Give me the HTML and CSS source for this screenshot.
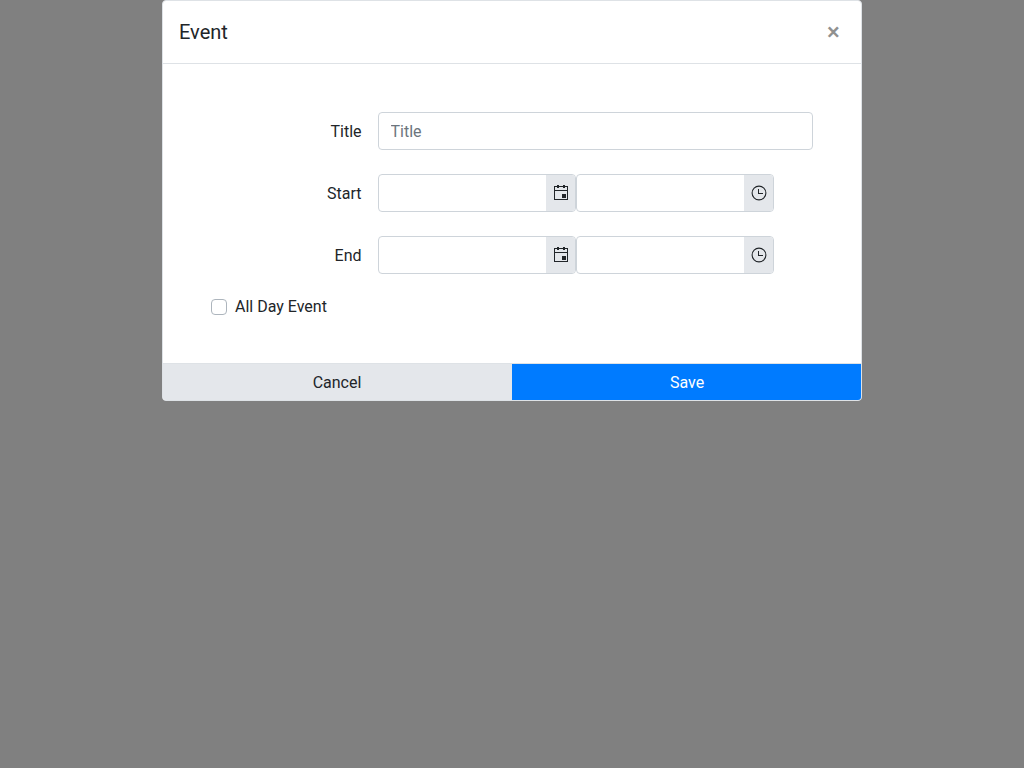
FILE: index.html
```
<!DOCTYPE html>
<html lang="en">
<head>
<meta charset="utf-8">
<title>Event</title>
<link rel="stylesheet" href="styles.css">
</head>
<body>
<svg class="sprite" aria-hidden="true">
  <symbol id="calendar" viewBox="0 0 16 16">
    <path d="M15 1h-3V0h-2v1H6V0H4v1H1v14h14V1zM2 2h2v1h2V2h4v1h2V2h2v3H2zM2 14V6h12v8z"/>
    <path d="M9 9h4v4H9z"/>
  </symbol>
  <symbol id="clock" viewBox="0 0 16 16">
    <circle cx="8" cy="8" r="6.9" fill="none" stroke="currentColor" stroke-width="1.1"/>
    <path d="M7 4h1v4h4v1H7z"/>
  </symbol>
</svg>
<main class="modal">
  <header class="modal-header">
    <h1 class="modal-title">Event</h1>
    <button class="close" type="button">×</button>
  </header>
  <form class="modal-body">
    <div class="row">
      <label class="label" for="title">Title</label>
      <input class="input title-input" id="title" type="text" placeholder="Title">
    </div>
    <div class="row">
      <span class="label">Start</span>
      <div class="picker"><input class="picker-input" type="text"><button class="picker-button" type="button"><svg class="icon"><use href="#calendar"/></svg></button></div>
      <div class="picker"><input class="picker-input" type="text"><button class="picker-button" type="button"><svg class="icon"><use href="#clock"/></svg></button></div>
    </div>
    <div class="row">
      <span class="label">End</span>
      <div class="picker"><input class="picker-input" type="text"><button class="picker-button" type="button"><svg class="icon"><use href="#calendar"/></svg></button></div>
      <div class="picker"><input class="picker-input" type="text"><button class="picker-button" type="button"><svg class="icon"><use href="#clock"/></svg></button></div>
    </div>
    <label class="check"><input class="checkbox" type="checkbox">All Day Event</label>
  </form>
  <footer class="modal-footer">
    <button class="action cancel" type="button">Cancel</button>
    <button class="action save" type="button">Save</button>
  </footer>
</main>
</body>
</html>
```
FILE: styles.css
```
* { box-sizing: border-box; }
body { margin: 0; min-height: 100vh; background: #808080; font: 16px/24px Roboto, sans-serif; color: #212529; }
input, button { font: inherit; color: inherit; margin: 0; }
.sprite { display: none; }
.modal { width: 700px; height: 401px; margin: 0 auto; display: flex; flex-direction: column; background: #fff; border: 1px solid #dee2e6; border-radius: 4px; overflow: hidden; }
.modal-header { flex: none; height: 63px; display: flex; align-items: center; justify-content: space-between; padding: 0 16px; border-bottom: 1px solid #dee2e6; }
.modal-title { margin: 0; font-size: 20px; line-height: 30px; font-weight: 400; }
.close { width: 24px; height: 30px; padding: 0 0 0 1px; border: 0; background: none; font-size: 24px; line-height: 30px; font-weight: 500; color: #909090; }
.modal-body { flex: 1; min-height: 0; padding: 48px 48px 0; }
.row { display: flex; align-items: center; height: 38px; margin-bottom: 24px; }
.label { width: 151px; margin-right: 16px; padding: 1px 0.5px 0 0; text-align: right; }
.input, .picker { height: 38px; border: 1px solid #ced4da; border-radius: 4px; background: #fff; }
.title-input { width: 435px; padding: 6px 11.5px; }
.title-input::placeholder { color: #6c757d; opacity: 1; }
.picker { width: 198px; display: flex; overflow: hidden; }
.picker-input { flex: 1; min-width: 0; border: 0; background: none; padding: 6px 12px; }
.picker-button { width: 29px; border: 0; padding: 0; background: #e4e7eb; display: flex; align-items: center; justify-content: center; }
.icon { width: 16px; height: 16px; fill: currentColor; }
.check { display: flex; align-items: center; height: 24px; margin-top: -3px; }
.checkbox { appearance: none; width: 16px; height: 16px; margin-right: 8px; border: 1px solid #adb5bd; border-radius: 4px; background: #fff; }
.modal-footer { flex: none; display: flex; height: 37px; border-top: 1px solid #dee2e6; }
.action { flex: none; width: 50%; border: 0; padding: 2px 0 0; }
.cancel { background: #e4e7eb; padding-right: 1px; }
.save { background: #007bff; color: #fff; padding-left: 1px; }
```
